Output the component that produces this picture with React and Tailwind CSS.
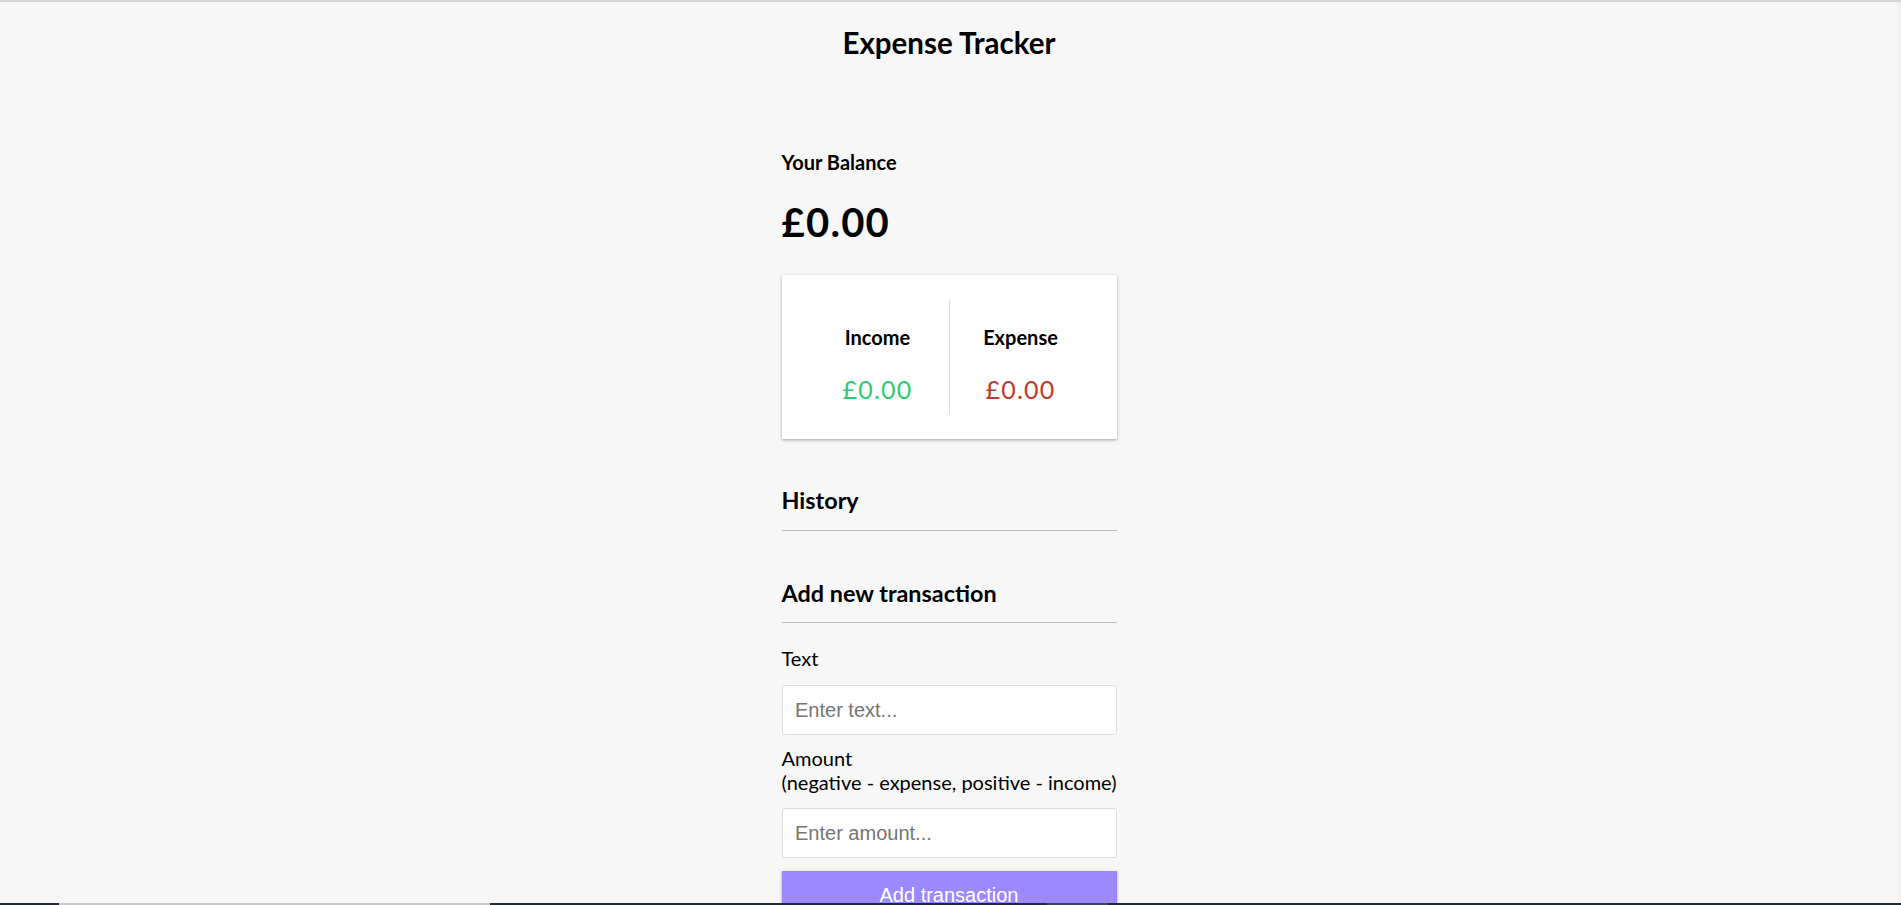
import React from "react";

export default function App() {
  return (
    <div className="min-h-screen bg-[#f7f7f7] font-['Lato','Noto_Sans',sans-serif] text-black flex border-t-2 border-[#d6d6d6]">
      <div className="flex-1 flex flex-col items-center">
        <h2 className="mt-[23px] text-[29.5px] leading-[36px] font-bold">Expense Tracker</h2>

        <div className="w-[335px] mt-[89px] pb-[40px]">
          <h4 className="text-[20px] leading-[24px] font-bold">Your Balance</h4>
          <h1 className="mt-[24px] text-[40px] leading-[48px] font-bold tracking-[1.25px]">£0.00</h1>

          <div className="mt-[29px] bg-white px-[25px] py-[25px] flex shadow-[0_1.25px_3.75px_rgba(0,0,0,0.12),0_1.25px_2.5px_rgba(0,0,0,0.24)]">
            <div className="flex-1 text-center border-r border-[#dedede]">
              <h4 className="mt-[25px] text-[20px] leading-[24px] font-bold">Income</h4>
              <p className="mt-[25px] mb-[10px] text-[25px] leading-[30px] tracking-[1.25px] text-[#2ecc71]">£0.00</p>
            </div>
            <div className="flex-1 text-center">
              <h4 className="mt-[25px] text-[20px] leading-[24px] font-bold">Expense</h4>
              <p className="mt-[25px] mb-[10px] text-[25px] leading-[30px] tracking-[1.25px] text-[#c0392b]">£0.00</p>
            </div>
          </div>

          <h3 className="mt-[47px] text-[23.4px] leading-[28px] font-bold pb-[16px] border-b border-[#bbbbbb]">History</h3>
          <ul></ul>

          <h3 className="mt-[48px] text-[23.4px] leading-[28px] font-bold pb-[15px] border-b border-[#bbbbbb]">Add new transaction</h3>

          <form onSubmit={(e) => e.preventDefault()}>
            <label htmlFor="text" className="block mt-[23px] text-[20px] leading-[24px]">Text</label>
            <input
              id="text"
              type="text"
              placeholder="Enter text..."
              className="block mt-[15px] w-full h-[50px] bg-white border border-[#dedede] rounded-[2.5px] px-[12.5px] text-[20px] font-['Liberation_Sans',Arial,sans-serif] placeholder:text-[#757575] outline-none"
            />
            <label htmlFor="amount" className="block mt-[11px] text-[20px] leading-[24px] whitespace-nowrap">
              Amount
              <br />
              (negative - expense, positive - income)
            </label>
            <input
              id="amount"
              type="number"
              placeholder="Enter amount..."
              className="block mt-[14px] w-full h-[50px] bg-white border border-[#dedede] rounded-[2.5px] px-[12.5px] text-[20px] font-['Liberation_Sans',Arial,sans-serif] placeholder:text-[#757575] outline-none"
            />
            <button
              type="submit"
              className="block mt-[13px] w-full h-[48px] bg-[#9c88ff] text-white text-[20px] font-['Liberation_Sans',Arial,sans-serif] shadow-[0_1.25px_3.75px_rgba(0,0,0,0.12),0_1.25px_2.5px_rgba(0,0,0,0.24)]"
            >
              Add transaction
            </button>
          </form>
        </div>
      </div>
      <div className="w-[3px] bg-[#f0f0f0]"></div>

      <div className="fixed left-0 right-0 bottom-0 h-[2px] flex">
        <div className="w-[59px] bg-[#1f2a33]"></div>
        <div className="w-[431px] bg-[#c8c8c8]"></div>
        <div className="w-[557px] bg-[#1f2a33]"></div>
        <div className="w-[61px] bg-[#3a4650]"></div>
        <div className="flex-1 bg-[#1f2a33]"></div>
      </div>
    </div>
  );
}
